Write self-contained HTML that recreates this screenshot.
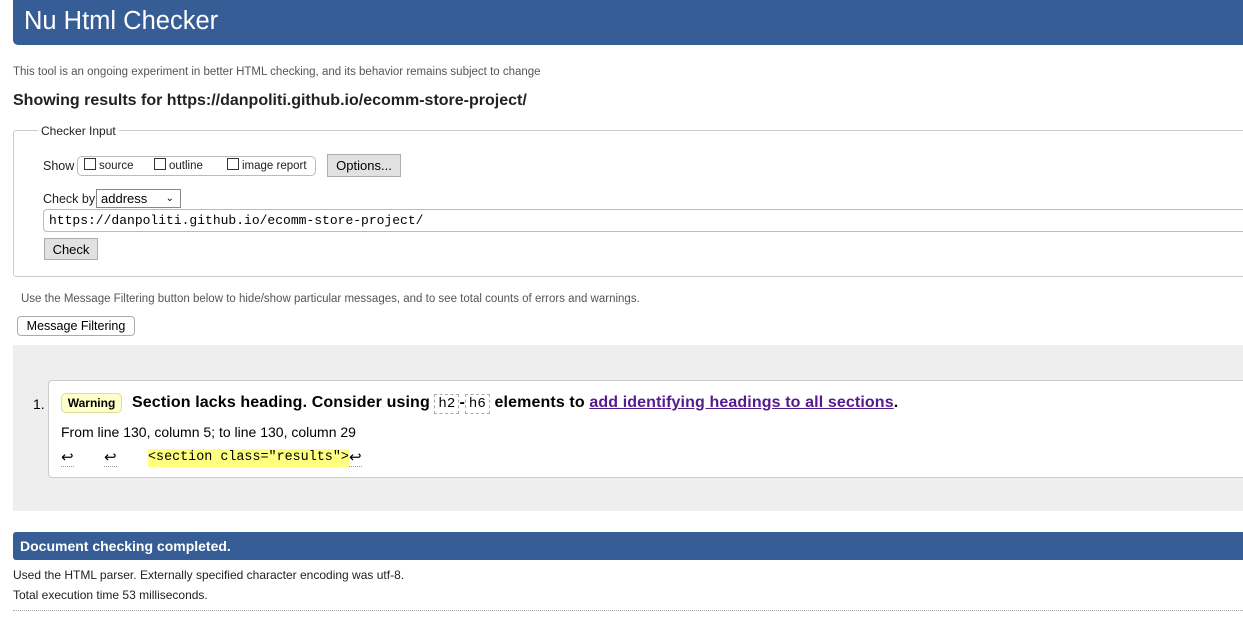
<!DOCTYPE html>
<html><head><meta charset="utf-8"><style>
*{margin:0;padding:0;box-sizing:border-box}
body{width:1243px;height:637px;background:#fff;font-family:"Liberation Sans",Arial,sans-serif;color:#000;position:relative;overflow:hidden}
.a{position:absolute;white-space:nowrap}
.btn{position:absolute;background:#e1e1e1;border:1px solid #adadad;font-size:13px;text-align:center}
.cb{display:inline-block;width:12px;height:12px;border:1px solid #333;vertical-align:-1px;margin-right:3px;background:#fff}
.code{font-family:"Liberation Mono",monospace;font-size:13px}
.dash{border:1px dashed #aaa;padding:1px 3px;font-weight:normal;font-family:"Liberation Mono",monospace;font-size:14px}
</style></head><body>
<div class="a" style="left:13px;top:0;width:1240px;height:45px;background:#365d95;border-radius:0 0 0 5px"></div>
<div class="a" style="left:24px;top:7px;color:#fff;font-size:25.5px">Nu Html Checker</div>
<div class="a" style="left:13px;top:66px;font-size:11.5px;color:#555">This tool is an ongoing experiment in better HTML checking, and its behavior remains subject to change</div>
<div class="a" style="left:13px;top:92px;font-size:16px;font-weight:bold;color:#222">Showing results for https://danpoliti.github.io/ecomm-store-project/</div>

<div class="a" style="left:13px;top:130px;width:1240px;height:147px;border:1px solid #ccc;border-radius:3px"></div>
<div class="a" style="left:38px;top:124px;background:#fff;padding:0 3px;font-size:12px;color:#222">Checker Input</div>
<div class="a" style="left:43px;top:159px;font-size:12.5px;color:#222">Show</div>
<div class="a" style="left:77px;top:156px;width:239px;height:20px;border:1px solid #bbb;border-radius:5px"></div>
<div class="a" style="left:84px;top:158px;font-size:11.5px;color:#222"><span class="cb"></span>source</div>
<div class="a" style="left:154px;top:158px;font-size:11.5px;color:#222"><span class="cb"></span>outline</div>
<div class="a" style="left:227px;top:158px;font-size:11.5px;color:#222"><span class="cb"></span>image report</div>
<div class="btn" style="left:327px;top:154px;width:74px;height:23px;line-height:21px">Options...</div>
<div class="a" style="left:43px;top:192px;font-size:12.5px;color:#222">Check by</div>
<div class="a" style="left:96px;top:189px;width:85px;height:19px;border:1px solid #888;font-size:13px;padding-left:4px;line-height:17px">address<span style="position:absolute;right:6px;top:0;font-size:10px">&#8964;</span></div>
<div class="a code" style="left:43px;top:209px;width:1210px;height:23px;border:1px solid #bbb;border-radius:4px;padding-left:5px;line-height:22px">https://danpoliti.github.io/ecomm-store-project/</div>
<div class="btn" style="left:44px;top:238px;width:54px;height:22px;line-height:21px">Check</div>

<div class="a" style="left:21px;top:293px;font-size:11.5px;color:#555">Use the Message Filtering button below to hide/show particular messages, and to see total counts of errors and warnings.</div>
<div class="a" style="left:17px;top:316px;width:118px;height:20px;border:1px solid #aaa;border-radius:4px;font-size:12.5px;text-align:center;line-height:18px">Message Filtering</div>

<div class="a" style="left:13px;top:345px;width:1240px;height:166px;background:#eee"></div>
<div class="a" style="left:48px;top:380px;width:1210px;height:98px;background:#fff;border:1px solid #ccc;border-radius:4px"></div>
<div class="a" style="left:33px;top:396px;font-size:14px">1.</div>
<div class="a" style="left:61px;top:393px;width:61px;height:20px;background:#ffffcc;border:1px solid #dddd99;border-radius:5px;font-size:12px;font-weight:bold;text-align:center;line-height:18px">Warning</div>
<div class="a" style="left:132px;top:394px;font-size:16px;font-weight:bold;letter-spacing:0.12px">Section lacks heading. Consider using <span class="dash">h2</span>-<span class="dash">h6</span> elements to <span style="color:#551a8b;text-decoration:underline">add identifying headings to all sections</span>.</div>
<div class="a" style="left:61px;top:424px;font-size:14px">From line 130, column 5; to line 130, column 29</div>
<div class="a" style="left:61px;top:448px;font-size:15px;border-bottom:1px dotted #999">&#8617;</div>
<div class="a" style="left:104px;top:448px;font-size:15px;border-bottom:1px dotted #999">&#8617;</div>
<div class="a code" style="left:148px;top:449px;background:#ffff80;height:18px;line-height:17px;font-size:13.4px">&lt;section class="results"&gt;</div>
<div class="a" style="left:349px;top:448px;font-size:15px;border-bottom:1px dotted #999">&#8617;</div>

<div class="a" style="left:13px;top:532px;width:1240px;height:28px;background:#365d95;border-radius:3px 0 0 3px"></div>
<div class="a" style="left:20px;top:538px;color:#fff;font-size:14px;font-weight:bold">Document checking completed.</div>
<div class="a" style="left:13px;top:568px;font-size:12px;color:#222">Used the HTML parser. Externally specified character encoding was utf-8.</div>
<div class="a" style="left:13px;top:588px;font-size:12px;color:#222">Total execution time 53 milliseconds.</div>
<div class="a" style="left:13px;top:610px;width:1240px;border-top:1px dotted #aaa"></div>
</body></html>
